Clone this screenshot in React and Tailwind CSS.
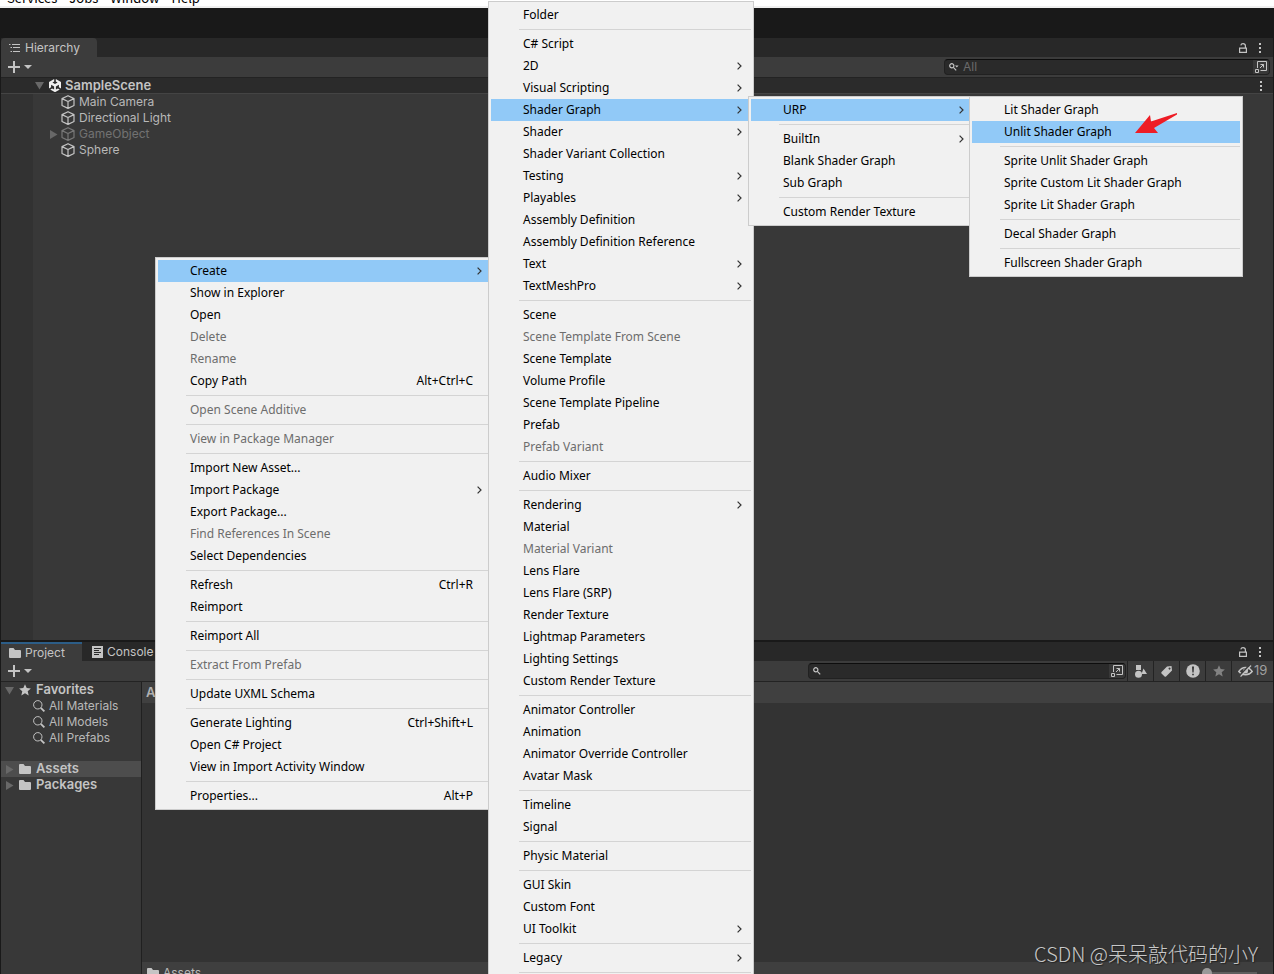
import { clsx } from 'clsx'

const SEP = { sep: true }

const contextMenu = [
  { label: 'Create', sub: true, active: true },
  { label: 'Show in Explorer' },
  { label: 'Open' },
  { label: 'Delete', off: true },
  { label: 'Rename', off: true },
  { label: 'Copy Path', keys: 'Alt+Ctrl+C' },
  SEP,
  { label: 'Open Scene Additive', off: true },
  SEP,
  { label: 'View in Package Manager', off: true },
  SEP,
  { label: 'Import New Asset...' },
  { label: 'Import Package', sub: true },
  { label: 'Export Package...' },
  { label: 'Find References In Scene', off: true },
  { label: 'Select Dependencies' },
  SEP,
  { label: 'Refresh', keys: 'Ctrl+R' },
  { label: 'Reimport' },
  SEP,
  { label: 'Reimport All' },
  SEP,
  { label: 'Extract From Prefab', off: true },
  SEP,
  { label: 'Update UXML Schema' },
  SEP,
  { label: 'Generate Lighting', keys: 'Ctrl+Shift+L' },
  { label: 'Open C# Project' },
  { label: 'View in Import Activity Window' },
  SEP,
  { label: 'Properties...', keys: 'Alt+P' },
]

const createMenu = [
  { label: 'Folder' },
  SEP,
  { label: 'C# Script' },
  { label: '2D', sub: true },
  { label: 'Visual Scripting', sub: true },
  { label: 'Shader Graph', sub: true, active: true },
  { label: 'Shader', sub: true },
  { label: 'Shader Variant Collection' },
  { label: 'Testing', sub: true },
  { label: 'Playables', sub: true },
  { label: 'Assembly Definition' },
  { label: 'Assembly Definition Reference' },
  { label: 'Text', sub: true },
  { label: 'TextMeshPro', sub: true },
  SEP,
  { label: 'Scene' },
  { label: 'Scene Template From Scene', off: true },
  { label: 'Scene Template' },
  { label: 'Volume Profile' },
  { label: 'Scene Template Pipeline' },
  { label: 'Prefab' },
  { label: 'Prefab Variant', off: true },
  SEP,
  { label: 'Audio Mixer' },
  SEP,
  { label: 'Rendering', sub: true },
  { label: 'Material' },
  { label: 'Material Variant', off: true },
  { label: 'Lens Flare' },
  { label: 'Lens Flare (SRP)' },
  { label: 'Render Texture' },
  { label: 'Lightmap Parameters' },
  { label: 'Lighting Settings' },
  { label: 'Custom Render Texture' },
  SEP,
  { label: 'Animator Controller' },
  { label: 'Animation' },
  { label: 'Animator Override Controller' },
  { label: 'Avatar Mask' },
  SEP,
  { label: 'Timeline' },
  { label: 'Signal' },
  SEP,
  { label: 'Physic Material' },
  SEP,
  { label: 'GUI Skin' },
  { label: 'Custom Font' },
  { label: 'UI Toolkit', sub: true },
  SEP,
  { label: 'Legacy', sub: true },
  SEP,
]

const shaderGraphMenu = [
  { label: 'URP', sub: true, active: true },
  SEP,
  { label: 'BuiltIn', sub: true },
  { label: 'Blank Shader Graph' },
  { label: 'Sub Graph' },
  SEP,
  { label: 'Custom Render Texture' },
]

const urpMenu = [
  { label: 'Lit Shader Graph' },
  { label: 'Unlit Shader Graph', active: true },
  SEP,
  { label: 'Sprite Unlit Shader Graph' },
  { label: 'Sprite Custom Lit Shader Graph' },
  { label: 'Sprite Lit Shader Graph' },
  SEP,
  { label: 'Decal Shader Graph' },
  SEP,
  { label: 'Fullscreen Shader Graph' },
]

function Menu({ name, items, className }) {
  return (
    <ul aria-label={name} className={clsx("absolute border border-[#cccccc] bg-[#f1f1f1] p-0.5 font-['Noto_Sans',sans-serif] text-xs", className)}>
      {items.map((it, i) => it.sep ? (
        <li key={i} className="ml-7 py-[3px]"><hr className="border-0 h-px bg-[#d4d4d4]" /></li>
      ) : (
        <li key={i}>
          <button disabled={it.off} className={clsx('flex h-[22px] w-full items-center justify-between whitespace-nowrap pl-8 pr-[9px] text-left',
            it.active && 'bg-[#91c9f7]', it.off ? 'text-[#6d6d6d]' : 'text-black')}>
            <span>{it.label}</span>
            {it.keys && <span className="pr-[9px]">{it.keys}</span>}
            {it.sub && (
              <svg width="5" height="8" viewBox="0 0 5 8" fill="none" stroke="#333" strokeWidth="1.2"><path d="M.6.6 4 4 .6 7.4" /></svg>
            )}
          </button>
        </li>
      ))}
    </ul>
  )
}

const Cube = () => (
  <svg width="14" height="14" viewBox="0 0 14 14" fill="none" stroke="#c4c4c4" strokeWidth="1.2" strokeLinejoin="round">
    <path d="M7 .7 13 3.600v6.900L7 13.400 1 10.500V3.600zM1 3.600l6 2.900 6-2.900M7 6.500v6.900" />
  </svg>
)

const UnityLogo = () => (
  <svg width="12" height="13" viewBox="0 0 12 13">
    <path d="M5.200 0v2.400L3.400 3.500 6 5l2.600-1.500-1.800-1.100V0L12 3v6.500L9.900 8.300V5.800L6.900 7.500v3.100l2-1.100 1.900 1.100L6 13.200 1.200 10.600l1.900-1.100 2 1.100V7.500L2.100 5.800v2.500L0 9.500V3z" fill="#f0f0f0" />
  </svg>
)

const Folder = () => (
  <svg width="12" height="10" viewBox="0 0 12 10" fill="#c4c4c4"><path d="M0 1Q0 0 1 0h3.500l1.500 2h5q1 0 1 1v6q0 1-1 1H1Q0 10 0 9z" /></svg>
)

const Star = ({ className }) => (
  <svg width="12" height="12" viewBox="0 0 12 12" fill="currentColor" className={className}>
    <path d="m6 .2 1.700 3.900 4.200.4-3.200 2.800 1 4.200L6 9.300l-3.700 2.200 1-4.200L.1 4.500l4.200-.4z" />
  </svg>
)

const Lens = () => (
  <svg width="12" height="12" viewBox="0 0 12 12" fill="none" stroke="#c4c4c4">
    <circle cx="4.800" cy="4.800" r="4.200" /><path d="m7.800 7.800 3.600 3.600" strokeWidth="1.800" />
  </svg>
)

// search field glyph, with the little filter arrow when there is a drop-down
const SmallLens = ({ drop }) => (
  <svg width="10" height="8" viewBox="0 0 10 8" fill="none" stroke="#c4c4c4" strokeWidth="1.200">
    <circle cx="2.800" cy="2.800" r="2.100" /><path d="m4.400 4.400 2.800 2.900" />
    {drop && <path d="M6 2.500h3.600L7.800 4.600z" fill="#c4c4c4" stroke="none" />}
  </svg>
)

const Arrow = ({ open }) => (
  <svg width="9" height="9" viewBox="0 0 9 9" fill="#686868" className="shrink-0">
    <path d={open ? 'M0 1h9L4.500 8.500z' : 'M1 0v9l7.500-4.500z'} />
  </svg>
)

const Lock = () => (
  <svg width="8" height="10" viewBox="0 0 8 10" fill="none" stroke="#c4c4c4" strokeWidth="1.200">
    <path d="M.6 5.200h6.800v4.200H.6zM6.400 5V2.800Q6.400.7 4 .7 2.200.7 1.800 2.400" />
  </svg>
)

const Kebab = () => (
  <svg width="2" height="10" viewBox="0 0 2 10" fill="#c4c4c4"><path d="M0 0h2v2H0zM0 4h2v2H0zM0 8h2v2H0z" /></svg>
)

const Popout = () => (
  <svg width="12" height="12" viewBox="0 0 12 12" fill="none" stroke="#c4c4c4">
    <path d="M2.500 7V.5h9v9H5.500M.5 8.500h3v3h-3zM5 7l3.500-3.500M5.500 3.500h3v3" />
  </svg>
)

function PanelTools() {
  return (
    <div className="flex items-center gap-3 pr-3">
      <button aria-label="Lock"><Lock /></button>
      <button aria-label="Panel menu"><Kebab /></button>
    </div>
  )
}

function AddButton() {
  return (
    <button aria-label="Add" className="flex items-center gap-1 pl-[7px]">
      <svg width="12" height="12" viewBox="0 0 12 12" fill="#c4c4c4"><path d="M5 0h2v12H5zM0 5h12v2H0z" /></svg>
      <svg width="8" height="4" viewBox="0 0 8 4" fill="#c4c4c4"><path d="M0 0h8L4 4z" /></svg>
    </button>
  )
}

function Search({ name, placeholder, drop, className }) {
  return (
    <div className={clsx('flex h-4 items-center overflow-hidden rounded border border-[#212121] border-t-[#0d0d0d] bg-[#2a2a2a]', className)}>
      <label className="flex min-w-0 flex-1 items-center gap-1 pl-1">
        <SmallLens drop={drop} />
        <input aria-label={name} placeholder={placeholder} className="h-3.5 min-w-0 flex-1 bg-transparent text-xs text-[#c4c4c4] outline-none placeholder:text-[#6a6a6a]" />
      </label>
      <button aria-label="Open in search window" className="flex h-full w-4 items-center justify-center bg-[#383838]"><Popout /></button>
    </div>
  )
}

function SceneItem({ label, dim, parent }) {
  return (
    <li className="flex h-4 items-center pl-4 text-[#b8b8b8]">
      <span className="flex w-3">{parent && <Arrow />}</span>
      <span className={clsx('flex items-center gap-1', dim && 'opacity-45')}><Cube />{label}</span>
    </li>
  )
}

function Hierarchy() {
  return (
    <section className="flex h-[602px] flex-col">
      <header className="flex h-[19px] justify-between bg-[#282828]">
        <h2 className="flex w-24 items-center gap-1 rounded-t bg-[#3c3c3c] pl-2">
          <svg width="12" height="10" viewBox="0 0 12 10" stroke="#c4c4c4"><path d="M3 1.500h8M4 4.500h7M4 8.500h7M0 1.500h1.500M1.500 4.500H3M1.500 8.500H3" /></svg>
          Hierarchy
        </h2>
        <PanelTools />
      </header>
      <div className="flex h-[21px] items-center justify-between border-b border-[#232323] bg-[#3c3c3c] pr-[3px]">
        <AddButton />
        <Search name="Search hierarchy" placeholder="All" drop className="w-[326px]" />
      </div>
      <div className="flex h-4 items-center border-b border-[#444] bg-[#2b2b2b] pl-[34px] pr-[11px]">
        <Arrow open />
        <span className="flex pl-[5px]"><UnityLogo /></span>
        <h3 className="flex-1 pl-1 text-[13px] font-semibold">SampleScene</h3>
        <button aria-label="Scene menu"><Kebab /></button>
      </div>
      <div className="flex flex-1 bg-[#383838]">
        <div className="w-8 bg-[#323232]" />
        <ul>
          <SceneItem label="Main Camera" />
          <SceneItem label="Directional Light" />
          <SceneItem label="GameObject" dim parent />
          <SceneItem label="Sphere" />
        </ul>
      </div>
    </section>
  )
}

const toolIcons = [
  ['Filter by type', <svg key="t" width="13" height="13" viewBox="0 0 13 13" fill="#c4c4c4"><path d="M2 0h5v5H2zM9.500 3.500 13 9H7.500z" /><circle cx="4.500" cy="9.200" r="3.500" /></svg>],
  ['Filter by label', <svg key="l" width="11" height="11" viewBox="0 0 11 11" fill="#c4c4c4"><path fillRule="evenodd" d="M6 .5 10.500 0 11 4.500 5 10.500Q4.300 11 3.600 10.400L.5 7.400Q0 6.700.5 6zM8.500 1.500a1 1 0 1 0 .1 0z" /></svg>],
  ['Filter by log type', <svg key="e" width="14" height="14" viewBox="0 0 14 14"><circle cx="7" cy="7" r="6.800" fill="#c4c4c4" /><path d="M6 2.500h2L7.600 8.500H6.400zM6.200 9.700h1.600v1.600H6.200z" fill="#333" /></svg>],
  ['Save search', <Star key="s" className="text-[#828282]" />],
]

function Project() {
  return (
    <section className="flex min-h-0 flex-1 flex-col">
      <header className="flex h-[19px] justify-between bg-[#282828]">
        <div className="flex">
          <h2 className="flex w-[81px] items-center gap-1 border-t-2 border-[#2c5d87] bg-[#3c3c3c] pl-2 leading-none"><Folder />Project</h2>
          <h2 className="flex items-center gap-1 pl-2.5">
            <svg width="11" height="12" viewBox="0 0 11 12"><path fill="#c4c4c4" d="M0 0h11v12H0z" /><path stroke="#282828" d="M2 2.500h7M2 4.500h5M2 6.500h7M2 8.500h5" /></svg>
            Console
          </h2>
        </div>
        <PanelTools />
      </header>
      <div className="flex h-[21px] items-center justify-between border-b border-[#232323] bg-[#3c3c3c]">
        <AddButton />
        <div className="flex h-full items-center">
          <Search name="Search project" className="mr-px w-[318px]" />
          {toolIcons.map(([name, icon]) => (
            <button key={name} aria-label={name} className="flex h-full w-[26px] items-center justify-center border-l border-[#232323]">{icon}</button>
          ))}
          <button aria-label="Hidden packages" className="flex h-full w-[42px] items-center gap-px border-l border-[#232323] pl-1.5 text-[13px] text-[#a0a0a0]">
            <svg width="15" height="12" viewBox="0 0 15 12" fill="none" stroke="#c4c4c4" strokeWidth="1.400">
              <path d="M.8 6.500Q3.500 2.500 7.500 2.500q4 0 6.700 4Q11.500 9.800 7.500 9.800q-4 0-6.700-3.300z" /><circle cx="7.500" cy="6" r="1.800" fill="#c4c4c4" /><path d="M2.500 11.500 13 .5" /><path d="M1.500 10.500 12 -.5" stroke="#3c3c3c" />
            </svg>
            19
          </button>
        </div>
      </div>
      <div className="flex min-h-0 flex-1">
        <aside className="w-[141px] shrink-0 border-r border-[#202020] bg-[#383838]">
          <h3 className="flex h-4 items-center pl-1 text-[13px] font-semibold"><Arrow open /><Star className="mx-[5px] text-[#c4c4c4]" />Favorites</h3>
          <ul className="pb-[15px] text-[#b8b8b8]">
            {['All Materials', 'All Models', 'All Prefabs'].map((t) => (
              <li key={t} className="flex h-4 items-center gap-1 pl-8"><Lens />{t}</li>
            ))}
          </ul>
          <ul className="text-[13px] font-semibold">
            <li className="flex h-4 items-center bg-[#4d4d4d] pl-1"><Arrow /><span className="px-[5px]"><Folder /></span>Assets</li>
            <li className="flex h-4 items-center pl-1"><Arrow /><span className="px-[5px]"><Folder /></span>Packages</li>
          </ul>
        </aside>
        <div className="flex min-w-0 flex-1 flex-col bg-[#333333]">
          <div className="flex h-[21px] items-center bg-[#404040] pl-1 text-[13px] font-semibold text-[#b0b0b0]">Assets</div>
          <div className="flex-1" />
          <footer className="h-3 overflow-hidden bg-[#3f3f3f]">
            <div className="flex h-[21px] items-center justify-between pl-[5px] pr-4">
              <span className="flex items-center gap-1 text-[#b8b8b8]"><Folder />Assets</span>
              <input type="range" aria-label="Icon size" min="0" max="100" defaultValue="0"
                className="h-2.5 w-[55px] appearance-none bg-[linear-gradient(#5e5e5e,#5e5e5e)] bg-[length:100%_2px] bg-center bg-no-repeat [&::-webkit-slider-thumb]:size-2.5 [&::-webkit-slider-thumb]:appearance-none [&::-webkit-slider-thumb]:rounded-full [&::-webkit-slider-thumb]:bg-[#999]" />
            </div>
          </footer>
        </div>
      </div>
    </section>
  )
}

export default function App() {
  return (
    <div className="relative flex h-screen flex-col overflow-hidden bg-[#191919] font-[Inter,sans-serif] text-xs text-[#c4c4c4]">
      <nav className="flex h-2 items-end gap-3 overflow-hidden border-b-2 border-[#f0f0f0] bg-white pl-[7px] font-['Noto_Sans_CJK_SC','Noto_Sans',sans-serif] text-[13px] leading-4 text-black">
        <button>Services</button>
        <button>Jobs</button>
        <button>Window</button>
        <button>Help</button>
      </nav>
      <main className="flex min-h-0 flex-1 flex-col gap-0.5 px-px pt-[30px]">
        <Hierarchy />
        <Project />
      </main>

      <Menu name="Assets" items={contextMenu} className="left-[155px] top-[257px] w-[339px]" />
      <Menu name="Create" items={createMenu} className="left-[488px] top-px w-[266px]" />
      <Menu name="Shader Graph" items={shaderGraphMenu} className="left-[748px] top-24 w-[228px]" />
      <Menu name="URP" items={urpMenu} className="left-[969px] top-24 w-[274px]" />

      <svg width="42" height="21" viewBox="0 0 42 21" fill="#ee1c25" className="absolute left-[1135px] top-[113px]">
        <path d="M0 20 15 2l1 6.500L42 0v1.500L19 15l4 5z" />
      </svg>
      <p className="absolute bottom-1.5 right-4 font-['Noto_Sans_CJK_SC',sans-serif] text-xl font-light text-[#c8c8c8] [text-shadow:1px_1px_1px_#222]">CSDN @呆呆敲代码的小Y</p>
    </div>
  )
}
